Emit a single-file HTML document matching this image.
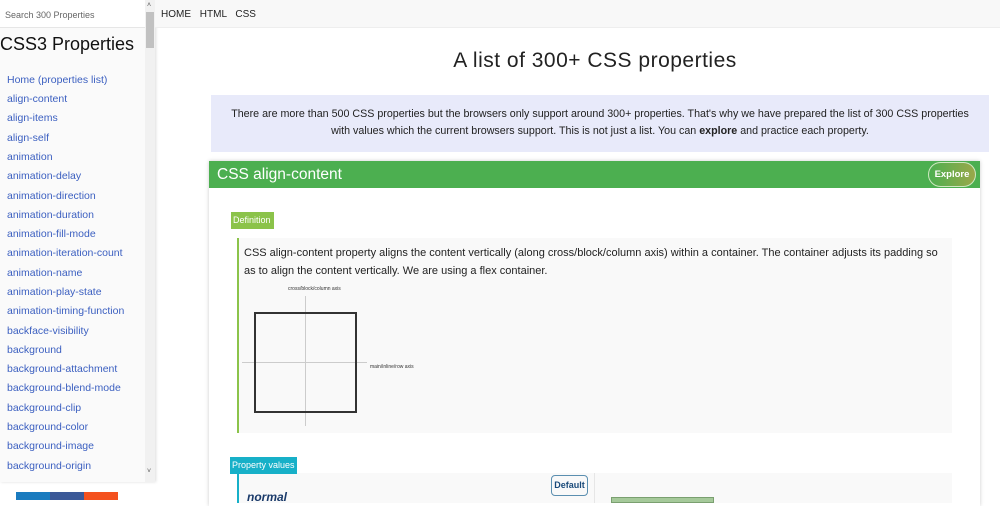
<!DOCTYPE html>
<html><head><style>
*{margin:0;padding:0;box-sizing:border-box}
body{width:1000px;height:500px;overflow:hidden;background:#fff;font-family:"Liberation Sans",sans-serif;position:relative}
.abs{position:absolute}
#side{left:0;top:0;width:155px;height:482px;background:#fafafa;box-shadow:1px 0 3px #ddd}
#search{left:0;top:0;width:145px;height:28px;background:#fff;border-bottom:1px solid #e6e6e6;font-size:9px;color:#666;padding:10px 0 0 5px}
#sb{left:145px;top:0;width:10px;height:482px;background:#f1f1f1}
#thumb{left:146px;top:12px;width:8px;height:36px;background:#c1c1c1}
.lk{position:absolute;left:7px;font-size:10.5px;color:#3b5fc0}
#nav{left:155px;top:0;width:845px;height:28px;background:#f8f8f8;border-bottom:1px solid #eee;font-size:10px;color:#222;padding:9px 0 0 6px;word-spacing:6px}
</style></head><body>
<div id="side" class="abs"></div>
<div id="search" class="abs">Search 300 Properties</div>
<div id="sb" class="abs"><div style="position:absolute;top:2px;left:2px;font-size:7px;color:#555">˄</div><div style="position:absolute;top:468px;left:2px;font-size:7px;color:#555">˅</div></div>
<div id="thumb" class="abs"></div>
<div class="abs" style="left:0;top:34px;font-size:18px;color:#111">CSS3 Properties</div>
<div class="lk" style="top:74px">Home (properties list)</div>
<div class="lk" style="top:93px">align-content</div>
<div class="lk" style="top:112px">align-items</div>
<div class="lk" style="top:132px">align-self</div>
<div class="lk" style="top:151px">animation</div>
<div class="lk" style="top:170px">animation-delay</div>
<div class="lk" style="top:190px">animation-direction</div>
<div class="lk" style="top:209px">animation-duration</div>
<div class="lk" style="top:228px">animation-fill-mode</div>
<div class="lk" style="top:247px">animation-iteration-count</div>
<div class="lk" style="top:267px">animation-name</div>
<div class="lk" style="top:286px">animation-play-state</div>
<div class="lk" style="top:305px">animation-timing-function</div>
<div class="lk" style="top:325px">backface-visibility</div>
<div class="lk" style="top:344px">background</div>
<div class="lk" style="top:363px">background-attachment</div>
<div class="lk" style="top:382px">background-blend-mode</div>
<div class="lk" style="top:402px">background-clip</div>
<div class="lk" style="top:421px">background-color</div>
<div class="lk" style="top:440px">background-image</div>
<div class="lk" style="top:460px">background-origin</div>
<div class="abs" style="left:16px;top:492px;width:34px;height:8px;background:#1a7bbf"></div>
<div class="abs" style="left:50px;top:492px;width:34px;height:8px;background:#3b5998"></div>
<div class="abs" style="left:84px;top:492px;width:34px;height:8px;background:#f4511e"></div>
<div id="nav" class="abs">HOME HTML CSS</div>
<div class="abs" style="left:155px;top:49px;width:880px;text-align:center;font-size:21px;color:#222;letter-spacing:.5px">A list of 300+ CSS properties</div>
<div class="abs" style="left:211px;top:95px;width:778px;height:57px;background:#e8eafa"></div>
<div class="abs" style="left:211px;top:106px;width:778px;text-align:center;font-size:10.7px;line-height:17px;color:#222">There are more than 500 CSS properties but the browsers only support around 300+ properties. That's why we have prepared the list of 300 CSS properties<br>with values which the current browsers support. This is not just a list. You can <b>explore</b> and practice each property.</div>
<div class="abs" style="left:209px;top:161px;width:771px;height:345px;background:#fff;box-shadow:0 0 4px #ccc"></div>
<div class="abs" style="left:209px;top:161px;width:771px;height:27px;background:#4caf50;color:#fff;font-size:15.5px;padding:5px 0 0 8px">CSS align-content</div>
<div class="abs" style="left:928px;top:162px;width:48px;height:25px;border:1px solid #cfe8c0;border-radius:13px;background:linear-gradient(90deg,#4caf50,#9aa84a);color:#fff;font-size:9.5px;font-weight:bold;text-align:center;line-height:23px">Explore</div>
<div class="abs" style="left:237px;top:238px;width:715px;height:195px;background:#f9f9f9;border-left:2px solid #8bc34a"></div>
<div class="abs" style="left:231px;top:212px;width:43px;height:17px;background:#8bc34a;color:#fff;font-size:9px;line-height:17px;padding-left:2px">Definition</div>
<div class="abs" style="left:244px;top:244px;width:700px;font-size:11px;line-height:18px;color:#222">CSS align-content property aligns the content vertically (along cross/block/column axis) within a container. The container adjusts its padding so as to align the content vertically. We are using a flex container.</div>
<div class="abs" style="left:288px;top:286px;font-size:5px;color:#333">cross/block/column axis</div>
<div class="abs" style="left:370px;top:364px;font-size:5px;color:#333">main/inline/row axis</div>
<div class="abs" style="left:305px;top:296px;width:1px;height:130px;background:#ccc"></div>
<div class="abs" style="left:242px;top:362px;width:125px;height:1px;background:#ccc"></div>
<div class="abs" style="left:254px;top:312px;width:103px;height:101px;border:2px solid #333"></div>
<div class="abs" style="left:237px;top:473px;width:715px;height:30px;background:#f9f9f9;border-left:2px solid #17b0c8"></div>
<div class="abs" style="left:594px;top:473px;width:1px;height:30px;background:#e6e6e6"></div>
<div class="abs" style="left:230px;top:457px;width:67px;height:17px;background:#17b0c8;color:#fff;font-size:9px;line-height:17px;padding-left:2px">Property values</div>
<div class="abs" style="left:551px;top:475px;width:37px;height:21px;border:1px solid #5b8fb0;border-radius:4px;color:#1a4a7a;font-size:9px;font-weight:bold;text-align:center;line-height:19px">Default</div>
<div class="abs" style="left:247px;top:490px;font-size:12px;font-style:italic;font-weight:bold;color:#1a3a6a">normal</div>
<div class="abs" style="left:611px;top:497px;width:103px;height:6px;background:#a5c99a;border:1px solid #7aa070"></div>
</body></html>
